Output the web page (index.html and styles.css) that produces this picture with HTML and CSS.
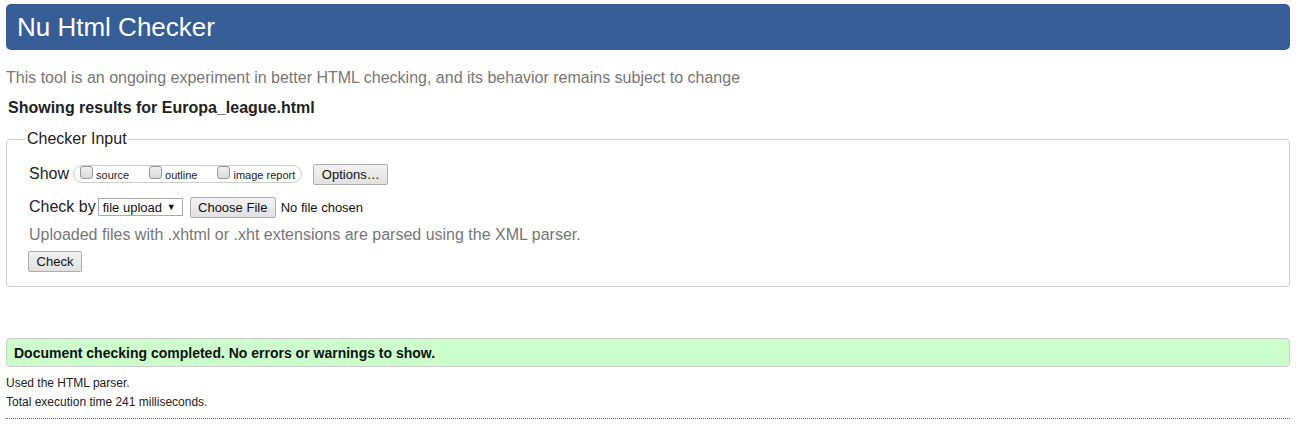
FILE: index.html
```html
<!DOCTYPE html>
<html lang="en">
<head>
<meta charset="utf-8">
<title>Showing results for Europa_league.html - Nu Html Checker</title>
<link rel="stylesheet" href="styles.css">
</head>
<body>
<h1 class="title">Nu Html Checker</h1>
<p class="intro">This tool is an ongoing experiment in better HTML checking, and its behavior remains subject to change</p>
<p class="results-for">Showing results for Europa_league.html</p>
<fieldset class="checker">
  <legend class="checker-legend">Checker Input</legend>
  <div class="row row-show">
    <span class="row-label">Show</span>
    <span class="show-group">
      <label class="opt"><span class="cb"></span><span class="opt-text">source</span></label>
      <label class="opt"><span class="cb"></span><span class="opt-text">outline</span></label>
      <label class="opt"><span class="cb"></span><span class="opt-text">image report</span></label>
    </span>
    <span class="btn btn-options">Options…</span>
  </div>
  <div class="row row-checkby">
    <span class="row-label">Check by</span>
    <span class="select">file upload <span class="caret">▼</span></span>
    <span class="btn btn-file">Choose File</span>
    <span class="no-file">No file chosen</span>
  </div>
  <div class="row row-note">Uploaded files with .xhtml or .xht extensions are parsed using the XML parser.</div>
  <div class="row row-check">
    <span class="btn btn-check">Check</span>
  </div>
</fieldset>
<div class="success">Document checking completed. No errors or warnings to show.</div>
<p class="meta">Used the HTML parser.</p>
<p class="meta">Total execution time 241 milliseconds.</p>
<hr class="end">
</body>
</html>
```
FILE: styles.css
```css
html, body {
  margin: 0;
  background: #fff;
}
body {
  padding: 4px 16px 0 6px;
  font-family: "Liberation Sans", Arial, sans-serif;
  color: #222;
}
.title {
  margin: 0;
  height: 46px;
  line-height: 47px;
  padding: 0 11px;
  background: #365d95;
  color: #fff;
  font-size: 26px;
  font-weight: normal;
  border-radius: 5px;
}
.intro {
  margin: 19px 0 0 0;
  font-size: 16px;
  line-height: 18px;
  color: #777;
}
.results-for {
  margin: 12px 0 0 2px;
  font-size: 16px;
  line-height: 18px;
  font-weight: bold;
  color: #222;
}
.checker {
  margin: 13px 0 0 0;
  padding: 14px 22px 14px 22px;
  border: 1px solid #ccc;
  border-radius: 4px;
  min-width: 0;
}
.checker-legend {
  font-size: 16px;
  line-height: 18px;
  padding: 0 1px;
  margin-left: -3px;
  color: #222;
}
.row {
  display: flex;
  align-items: center;
  font-size: 16px;
}
.row-show {
  height: 24px;
}
.row-label {
  font-size: 16px;
  line-height: 18px;
}
.show-group {
  display: flex;
  align-items: center;
  height: 16px;
  margin-left: 4px;
  padding: 0 6px 0 6px;
  border: 1px solid #ccc;
  border-radius: 9px;
}
.opt {
  display: flex;
  align-items: center;
  margin-right: 20px;
}
.opt:last-child {
  margin-right: 0;
}
.cb {
  width: 11px;
  height: 11px;
  border: 1px solid #999;
  border-radius: 3px;
  background: linear-gradient(#f0f0f0, #d9d9d9);
  margin-top: -3px;
  margin-right: 3px;
}
.opt-text {
  font-size: 11px;
  line-height: 13px;
  margin-top: 2px;
}
.btn {
  display: inline-flex;
  align-items: center;
  justify-content: center;
  box-sizing: border-box;
  height: 21px;
  border: 1px solid #adadad;
  border-radius: 2px;
  background: #e1e1e1;
  background: linear-gradient(#f2f2f2, #e1e1e1);
  font-size: 13px;
  color: #111;
}
.btn-options {
  width: 75px;
  margin-left: 11px;
}
.row-checkby {
  height: 22px;
  margin-top: 10px;
}
.select {
  display: inline-flex;
  align-items: center;
  box-sizing: border-box;
  width: 85px;
  height: 18px;
  margin-left: 2px;
  padding: 0 6px 0 4px;
  border: 1px solid #a9a9a9;
  background: #fff;
  font-size: 13px;
  color: #111;
  justify-content: space-between;
}
.caret {
  font-size: 9px;
}
.btn-file {
  width: 86px;
  height: 21px;
  margin-left: 7px;
}
.no-file {
  margin-left: 5px;
  font-size: 13px;
  color: #111;
}
.row-note {
  margin-top: 8px;
  line-height: 18px;
  color: #777;
}
.row-check {
  margin-top: 7px;
}
.btn-check {
  width: 54px;
  margin-left: -1px;
}
.success {
  margin-top: 51px;
  height: 29px;
  box-sizing: border-box;
  border: 1px solid #ccc;
  border-radius: 4px;
  background: #ccffcc;
  padding: 0 7px;
  display: flex;
  align-items: center;
  font-size: 14px;
  font-weight: bold;
  color: #111;
}
.meta {
  margin: 0;
  font-size: 12px;
  line-height: 19px;
  color: #222;
}
.success + .meta {
  margin-top: 7px;
}
.end {
  margin: 6px 0 0 0;
  border: 0;
  border-top: 1px dotted #666;
  height: 0;
}
```
